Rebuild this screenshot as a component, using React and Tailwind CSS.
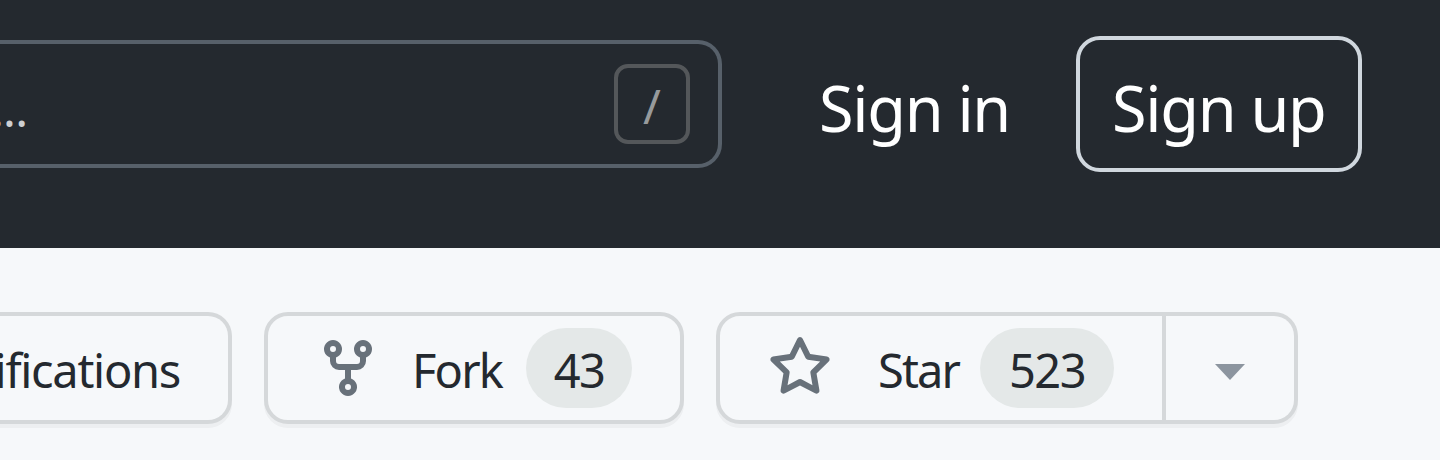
const FORK_PATH =
  'M5 3.25a.75.75 0 11-1.5 0 .75.75 0 011.5 0zm0 2.122a2.25 2.25 0 10-1.5 0v.878A2.25 2.25 0 005.75 8.5h1.5v2.128a2.251 2.251 0 101.5 0V8.5h1.5a2.25 2.25 0 002.25-2.25v-.878a2.25 2.25 0 10-1.5 0v.878a.75.75 0 01-.75.75h-4.5A.75.75 0 015 6.25v-.878zm3.75 7.378a.75.75 0 11-1.5 0 .75.75 0 011.5 0zm3-8.75a.75.75 0 100-1.5.75.75 0 000 1.5z';
const STAR_PATH =
  'M8 .25a.75.75 0 01.673.418l1.882 3.815 4.21.612a.75.75 0 01.416 1.279l-3.046 2.97.719 4.192a.75.75 0 01-1.088.791L8 12.347l-3.766 1.98a.75.75 0 01-1.088-.79l.72-4.194L.818 6.374a.75.75 0 01.416-1.28l4.21-.611L7.327.668A.75.75 0 018 .25zm0 2.445L6.615 5.5a.75.75 0 01-.564.41l-3.097.45 2.24 2.184a.75.75 0 01.216.664l-.528 3.084 2.769-1.456a.75.75 0 01.698 0l2.77 1.456-.53-3.084a.75.75 0 01.216-.664l2.24-2.183-3.096-.45a.75.75 0 01-.564-.41L8 2.694v.001z';

function Icon({ d }) {
  return (
    <svg className="h-16 w-16 shrink-0 fill-[#68717a]" viewBox="0 0 16 16" aria-hidden="true">
      <path fillRule="evenodd" d={d} />
    </svg>
  );
}

function Header() {
  return (
    <header className="flex h-[248px] items-start bg-[#24292f] text-white">
      <div className="mt-10 flex h-32 w-[722px] shrink-0 items-center justify-between rounded-r-[24px] border-4 border-l-0 border-[#57606a] pr-7">
        <span className="-ml-[9px] pt-2.5 text-[48px] leading-none tracking-[-0.8px] text-[#cdcfd2]">...</span>
        <kbd className="flex h-20 w-[76px] items-center justify-center rounded-[14px] border-4 border-[#54575a] pt-1 font-['Noto_Sans',sans-serif] text-[48px] leading-none text-[#979a9c]">
          /
        </kbd>
      </div>
      <a className="mt-9 ml-[97px] flex h-[136px] w-[257px] shrink-0 items-center pt-[7px] text-[63px] leading-none whitespace-nowrap">
        <span className="tracking-[-1.3px]">Sign in</span>
      </a>
      <a className="mt-9 flex h-[136px] w-[286px] shrink-0 items-center rounded-[24px] border-4 border-[#d0d7de] pt-[7px] pl-8 text-[63px] leading-none whitespace-nowrap">
        <span className="tracking-[-1.3px]">Sign up</span>
      </a>
    </header>
  );
}

const button =
  'flex h-28 shrink-0 items-center border-4 border-[#d5d8da] bg-[#f6f8fa] shadow-[0_4px_0_rgba(27,31,36,0.04)] whitespace-nowrap';

function Actions() {
  return (
    <section className="flex gap-8 pt-16 text-[47px] leading-none text-[#24292f]">
      <button className={`${button} w-[232px] justify-end rounded-r-[24px] border-l-0 pr-12`}>
        <span className="pt-1 tracking-[-1.3px]">Notifications</span>
      </button>
      <button className={`${button} w-[420px] rounded-[24px] pl-12`}>
        <Icon d={FORK_PATH} />
        <span className="ml-8 w-[114px] pt-1 text-left tracking-[-1.8px]">Fork</span>
        <span className="flex h-20 w-[106px] items-center justify-center rounded-full bg-[#e4e8e8] pt-1 tracking-[-1.6px]">43</span>
      </button>
      <div className="flex">
        <button className={`${button} w-[450px] rounded-l-[24px] pl-12`}>
          <Icon d={STAR_PATH} />
          <span className="ml-[46px] w-[102px] pt-1 text-left tracking-[-1.9px]">Star</span>
          <span className="flex h-20 w-[134px] items-center justify-center rounded-full bg-[#e4e8e8] pt-1 tracking-[-1.6px]">523</span>
        </button>
        <button className={`${button} w-[132px] justify-center rounded-r-[24px] border-l-0`}>
          <svg className="mt-[7px] h-4 w-[30px] fill-[#8c959f]" viewBox="0 0 30 16" aria-hidden="true">
            <path d="M0 0H30L15 16z" />
          </svg>
        </button>
      </div>
    </section>
  );
}

export default function App() {
  return (
    <main className="h-[460px] w-[1440px] overflow-hidden bg-[#f6f8fa] font-['Noto_Sans','Open_Sans',sans-serif]">
      <Header />
      <Actions />
    </main>
  );
}
